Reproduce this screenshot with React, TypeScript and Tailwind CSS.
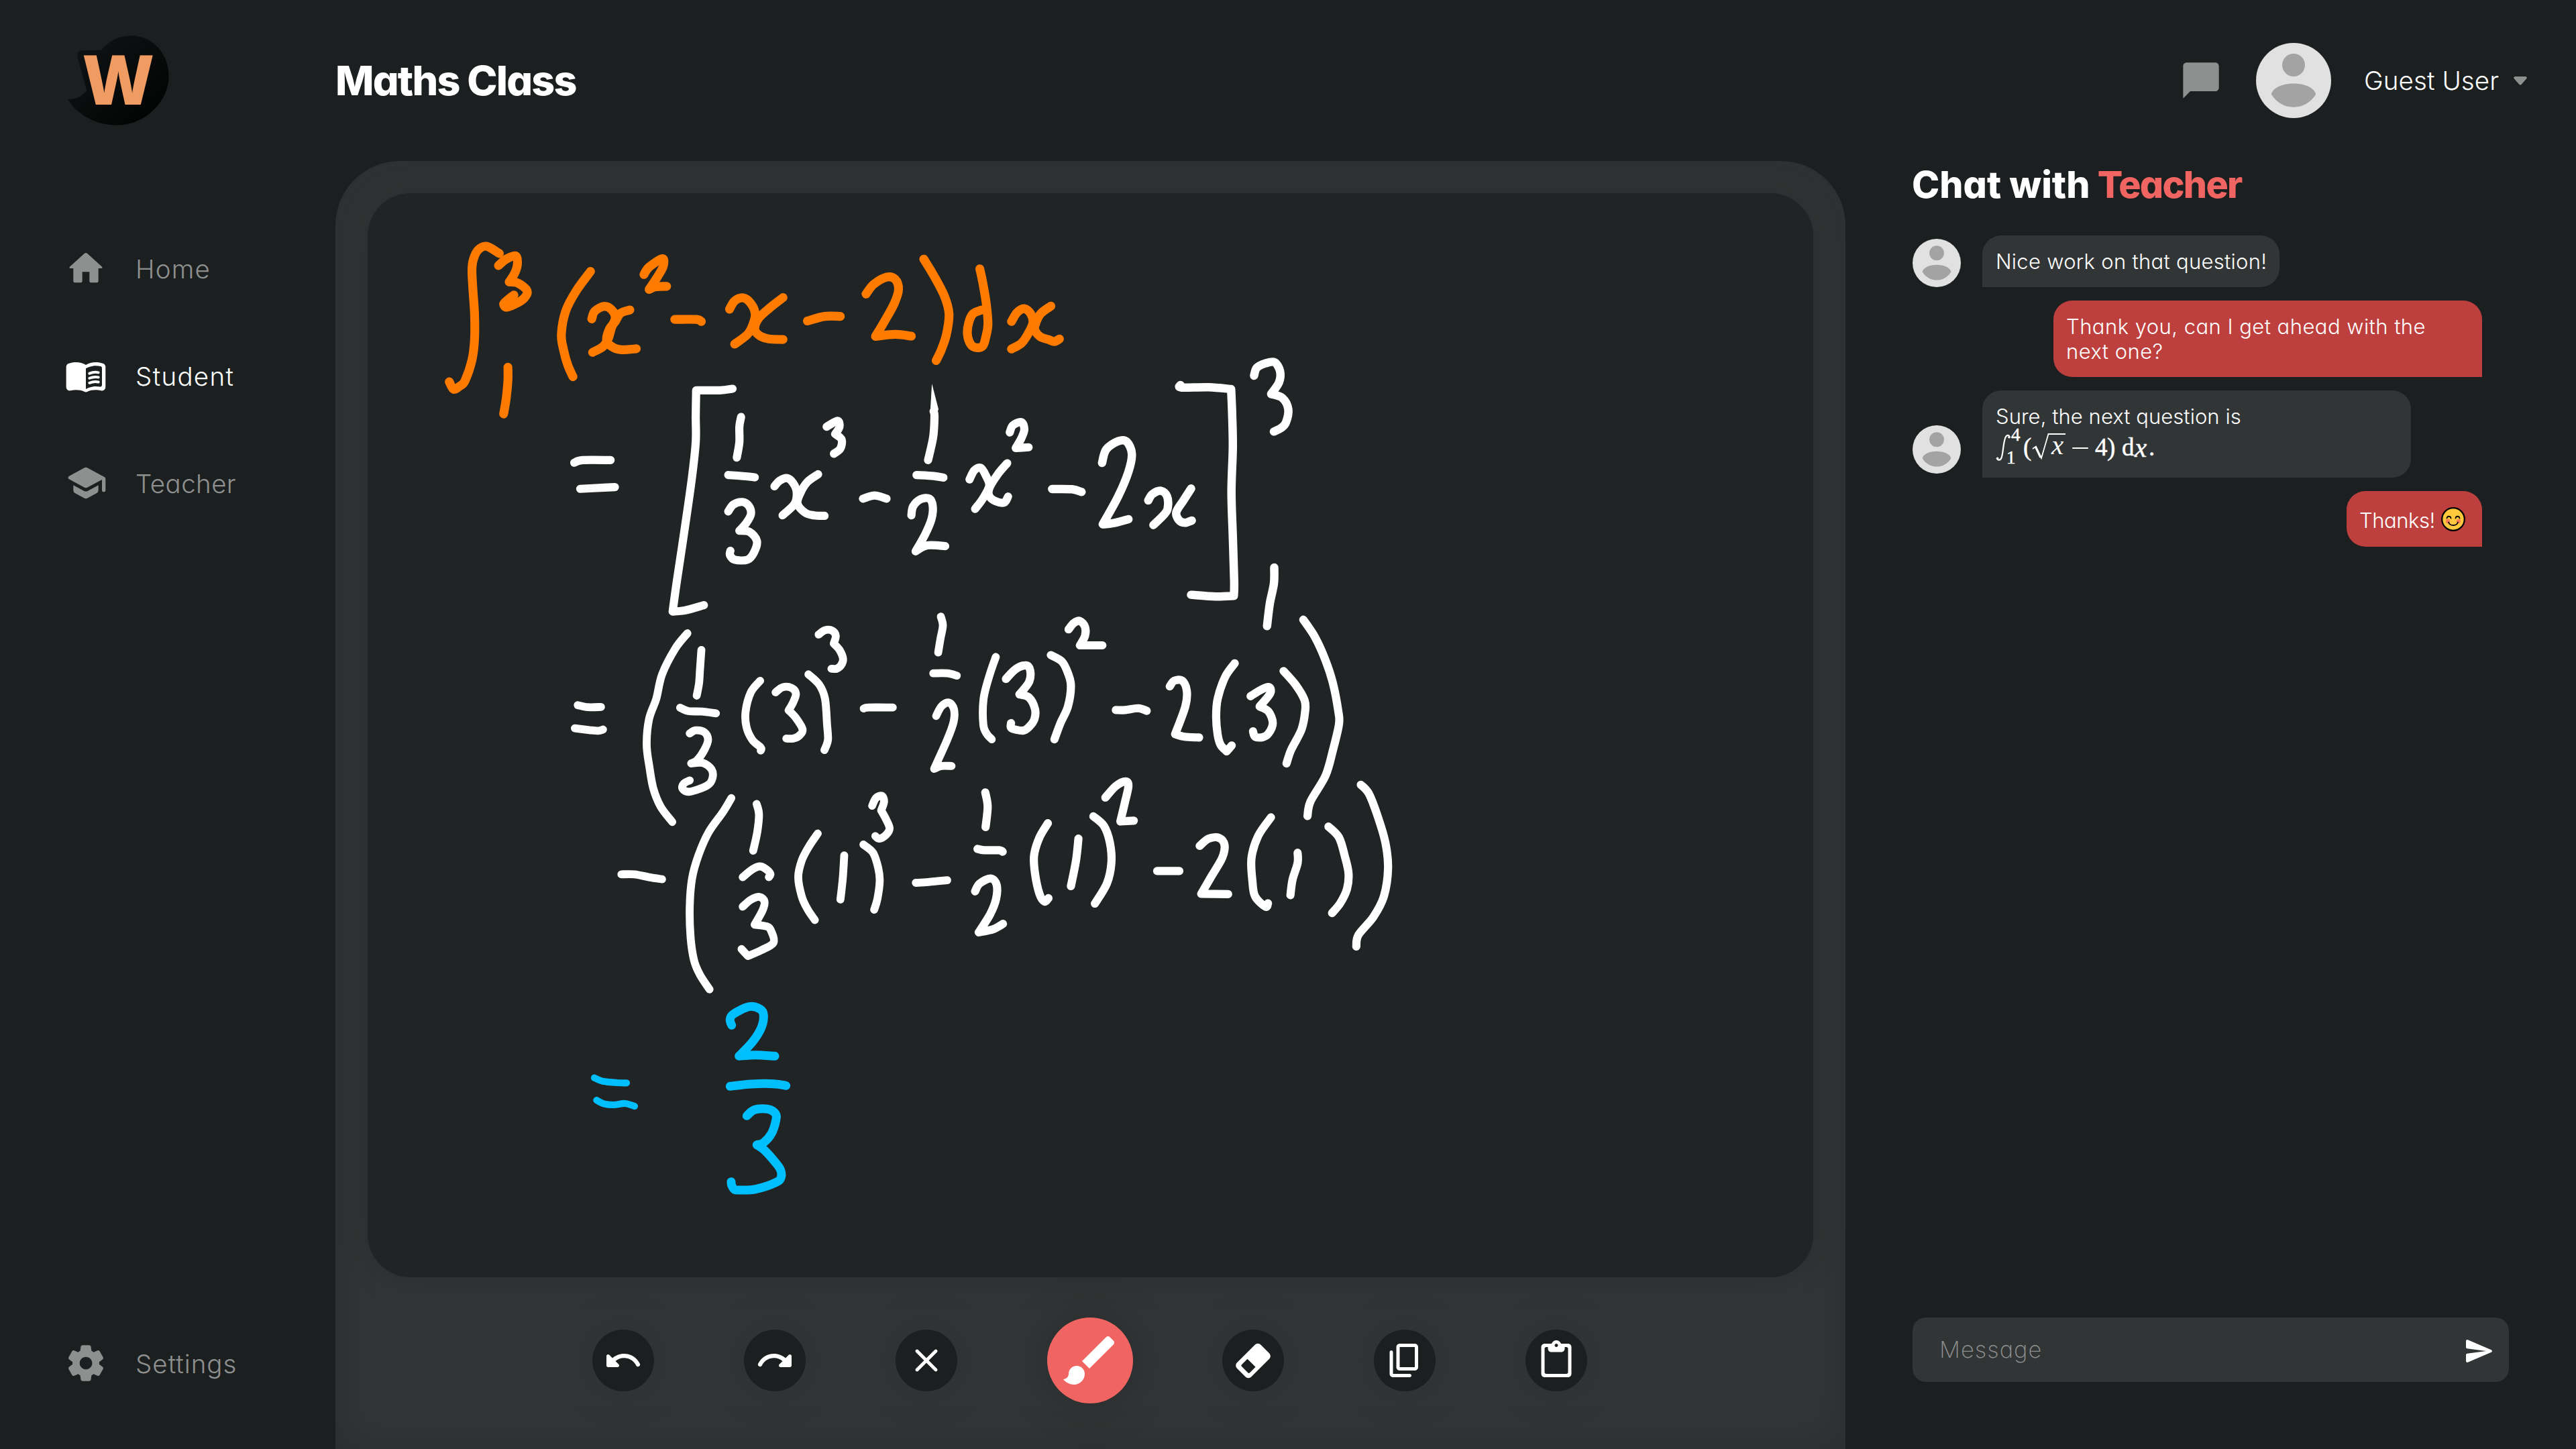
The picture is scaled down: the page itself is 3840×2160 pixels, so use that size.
import type { ReactNode } from "react";

/* ---------- whiteboard ink ---------- */

type Pt = [number, number];

// Turns "x,y x,y ..." into a Catmull-Rom path; a repeated point makes a corner.
function toPath(src: string): string {
  const p: Pt[] = src.trim().split(/\s+/).map((s) => s.split(",").map(Number) as Pt);
  let d = `M${p[0][0]} ${p[0][1]}`;
  const same = (a: Pt, b: Pt) => a[0] === b[0] && a[1] === b[1];
  for (let i = 0; i < p.length - 1; i++) {
    const p1 = p[i];
    const p2 = p[i + 1];
    if (same(p1, p2)) continue;
    const p0 = p[i - 1] ?? p1;
    const p3 = p[i + 2] ?? p2;
    const c1: Pt = [p1[0] + (p2[0] - p0[0]) / 6, p1[1] + (p2[1] - p0[1]) / 6];
    const c2: Pt = [p2[0] - (p3[0] - p1[0]) / 6, p2[1] - (p3[1] - p1[1]) / 6];
    d += `C${c1[0].toFixed(1)} ${c1[1].toFixed(1)} ${c2[0].toFixed(1)} ${c2[1].toFixed(1)} ${p2[0]} ${p2[1]}`;
  }
  return d;
}

const integralLine = [
  "195,125 165,97 145,112 134,150 131,190 133,260 137,360 137,460 131,540 115,620 104,640 88,654 78,625",
  "193,172 212,146 234,135 237,170 230,205 218,236 218,236 238,240 258,265 259,285 245,310 214,334 205,322 215,305 229,287",
  "215,568 215,620 211,690 205,750",
  "408,195 375,270 350,350 340,440 345,500 355,560 367,605",
  "411,380 418,350 440,331 458,345 466,375 457,415 450,455 437,488 413,510",
  "500,345 478,358 466,390 452,420 446,465 462,492 482,500 515,496",
  "533,207 545,178 576,145 578,175 565,215 545,265 545,265 560,255 586,253",
  "605,382 655,382 667,390",
  "733,342 745,310 765,298 783,320 793,360 788,400 775,440 745,478",
  "858,297 825,340 800,380 792,420 803,445 825,458 858,460",
  "915,388 955,370 992,370",
  "1052,283 1070,245 1100,217 1120,225 1128,265 1118,320 1095,390 1074,448 1074,448 1120,440 1158,447",
  "1187,147 1210,210 1235,290 1246,360 1240,440 1228,500 1216,542",
  "1318,185 1325,240 1333,320 1337,400 1332,450 1325,485 1310,492 1297,480 1289,440 1292,395 1302,360 1322,345",
  "1392,390 1405,355 1422,340 1437,360 1442,395 1430,440 1415,475 1392,497",
  "1484,330 1460,360 1448,400 1447,425 1460,450 1478,460 1492,468 1504,458",
];

const antiderivativeLeft = [
  "370,940 390,930 455,930",
  "384,1042 440,1037 465,1035",
  "740,652 710,658 655,658 655,658 654,760 654,860 645,1000 628,1200 610,1400 600,1520 600,1520 630,1515 673,1495",
  "760,762 756,800 756,860 750,920",
  "730,988 770,993 792,997",
  "730,1130 742,1103 763,1093 778,1108 783,1140 772,1175 756,1205 756,1205 780,1210 797,1245 790,1290 775,1318 745,1318 734,1300 735,1283",
  "838,1032 850,1010 868,1000 882,1020 890,1055 885,1100 857,1145",
  "940,985 915,1015 898,1060 892,1100 910,1135 930,1145 955,1147",
  "960,800 985,777 990,800 980,828 980,828 995,850 992,885 977,905",
  "1045,1080 1072,1068 1100,1080",
  "1210,740 1212,760 1209,840 1197,930",
  "1170,988 1210,992 1233,998",
  "1158,1145 1162,1110 1180,1082 1200,1080 1208,1110 1205,1160 1190,1220 1168,1285 1168,1285 1195,1262 1237,1265",
  "1294,1005 1305,970 1320,960 1332,990 1340,1030 1325,1080 1307,1120",
  "1382,942 1360,985 1340,1040 1340,1070 1355,1090 1375,1095 1384,1072",
  "1388,822 1395,795 1415,782 1422,810 1415,845 1402,883 1402,883 1432,880",
];

const antiderivativeRight = [
  "722,687 780,688 808,700",
  "868,570 880,510 915,473 940,475 955,530 945,610 915,720 870,845 870,845 900,840 945,822",
  "1003,738 1015,710 1040,695 1058,720 1060,770 1050,800 1018,848",
  "1128,685 1105,740 1085,790 1092,825 1110,838 1130,828",
  "1097,222 1100,233 1180,232 1245,240 1245,240 1248,350 1250,500 1246,700 1250,900 1254,1100 1253,1165 1253,1165 1200,1168 1128,1160",
  "1312,180 1320,145 1345,125 1372,120 1388,160 1385,210 1362,262 1362,262 1395,280 1412,330 1405,390 1390,415 1370,430",
  "1371,1038 1370,1110 1358,1200 1350,1300",
];

const substitutionLeft = [
  "95,395 130,403 175,402",
  "85,485 135,492 165,495 182,490",
  "472,115 430,175 385,275 365,370 340,450 332,550 342,640 355,720 380,790 420,850",
  "520,180 515,260 512,310 504,358",
  "447,405 475,418 520,420 570,427",
  "480,505 500,493 530,500 543,530 530,570 505,610 485,622 485,622 525,620 555,645 558,680 540,708 480,732 455,720 460,700 480,688",
  "722,300 690,345 672,420 675,480 695,530 724,560 724,572",
  "775,345 800,325 830,328 845,350 835,385 820,415 820,415 845,445 868,490 855,515 835,525 812,525",
  "888,275 925,315 945,370 952,470 955,530 943,570",
  "923,120 945,103 970,105 982,125 975,155 975,155 995,180 1007,215 1000,240 985,253 967,253",
  "1078,408 1095,404 1178,404",
  "1343,50 1350,85 1342,135 1334,190",
  "1317,271 1365,271 1398,280",
  "1327,437 1345,400 1370,385 1388,410 1387,460 1365,530 1320,643 1320,643 1345,632 1380,632",
  "1532,207 1510,280 1490,370 1489,470 1500,505 1518,528",
  "245,1054 290,1054 340,1065 385,1073",
  "623,757 595,810 545,890 510,980 488,1070 480,1180 483,1300 495,1390 515,1445 548,1502",
  "710,780 718,820 712,890 698,962",
  "662,1065 695,1035 720,1023 740,1032 757,1052 752,1065",
  "662,1180 690,1153 720,1142 737,1160 730,1195 703,1250 703,1250 745,1257 760,1275 768,1320 725,1350 680,1372 680,1372 658,1345",
  "920,895 890,945 865,1000 853,1065 865,1140 885,1190 910,1232",
  "1011,980 1006,1070 998,1152",
  "1077,938 1110,970 1128,1030 1133,1080 1125,1150 1114,1192",
  "1107,787 1120,757 1140,748 1148,770 1138,805 1138,805 1155,840 1167,875 1155,900 1132,915 1118,905",
  "1257,1087 1300,1084 1365,1077",
];

const substitutionRight = [
  "154,735 162,790 155,870",
  "128,955 150,960 200,960 212,966",
  "120,1120 135,1090 172,1070 192,1095 190,1150 170,1210 132,1280 132,1280 180,1268 213,1247",
  "223,293 255,255 290,240 304,260 300,305 268,353 268,353 300,365 320,410 318,450 300,480 280,494 242,485 240,465",
  "373,200 410,225 430,270 440,320 430,400 405,465 385,528",
  "432,100 450,75 470,67 487,90 487,125 470,162 470,162 545,162",
  "590,414 620,414 665,407 693,417",
  "770,322 785,300 812,300 827,340 822,400 788,508 788,508 820,518 868,521",
  "987,232 955,285 930,370 925,440 930,510 940,550 960,575 960,575 977,552",
  "1040,360 1075,335 1102,325 1105,350 1070,400 1070,400 1100,420 1114,465 1100,505 1080,520 1055,518 1048,497",
  "1150,262 1190,315 1220,375 1222,420 1210,490 1175,570 1160,622",
  "1216,62 1255,130 1290,220 1315,310 1333,420 1335,470 1315,570 1290,670 1240,770 1230,827",
  "363,855 335,910 317,980 320,1050 335,1130 352,1160 365,1147",
  "465,915 457,1000 440,1100",
  "515,828 550,865 570,930 575,1010 560,1090 520,1168",
  "555,755 590,710 622,692 632,710 620,775 605,848 605,848 650,845",
  "728,1041 802,1041",
  "870,943 900,915 935,912 953,940 945,990 910,1060 875,1130 875,1130 965,1131",
  "1108,832 1065,905 1043,990 1046,1080 1055,1140 1090,1180 1098,1167",
  "1197,970 1197,1010 1180,1075 1173,1135",
  "1300,868 1335,910 1355,985 1367,1050 1362,1110 1340,1165 1312,1205",
  "1408,705 1435,740 1465,830 1490,930 1499,1030 1485,1140 1450,1220 1400,1290 1393,1335",
];

const answerEquals = ["198,440 235,455 300,462 342,463", "208,540 240,556 285,561 335,555 378,567"];

const answerFraction = [
  "812,205 805,180 820,155 890,122 940,133 955,160 945,215 905,280 845,343 845,343 920,338 1005,343",
  "805,478 900,468 1000,467 1055,475",
  "880,610 915,583 975,580 1008,600 1010,630 990,690 955,730 925,740 925,740 960,765 1005,815 1030,850 1033,885 1010,908 920,938 850,942 825,940 812,920 810,905",
];

function Ink({ at, scale, color, width, strokes }: { at: Pt; scale: Pt; color: string; width: number; strokes: string[] }) {
  return (
    <g
      transform={`translate(${at[0]} ${at[1]}) scale(${scale[0]} ${scale[1]})`}
      fill="none"
      stroke={color}
      strokeWidth={width}
      strokeLinecap="round"
      strokeLinejoin="round"
    >
      {strokes.map((s) => (
        <path key={s} d={toPath(s)} vectorEffect="non-scaling-stroke" />
      ))}
    </g>
  );
}

function Whiteboard() {
  return (
    <div className="h-[1616px] w-full overflow-hidden rounded-[64px] bg-[#202425] shadow-[0_0_48px_rgba(0,0,0,0.16)]">
      <svg className="block h-full w-full" viewBox="548 288 2155 1616">
        <Ink at={[620, 330]} scale={[0.6378, 0.3827]} color="#ff7b00" width={13.2} strokes={integralLine} />
        <Ink at={[620, 330]} scale={[0.6378, 0.3827]} color="#ffffff" width={12.2} strokes={antiderivativeLeft} />
        <path d="M1389.200 572 L1399 610 L1397 616 L1386.500 616 Z" fill="#ffffff" />
        <Ink at={[1200, 500]} scale={[0.5102, 0.3333]} color="#ffffff" width={12.5} strokes={antiderivativeRight} />
        <Ink at={[820, 900]} scale={[0.4337, 0.3827]} color="#ffffff" width={11.8} strokes={substitutionLeft} />
        <Ink at={[1400, 900]} scale={[0.4464, 0.3827]} color="#ffffff" width={12.2} strokes={substitutionRight} />
        <Ink at={[820, 1460]} scale={[0.3333, 0.3333]} color="#00bfff" width={10.2} strokes={answerEquals} />
        <Ink at={[820, 1460]} scale={[0.3333, 0.3333]} color="#00bfff" width={13} strokes={answerFraction} />
      </svg>
    </div>
  );
}

/* ---------- icons ---------- */

function Icon({ d, className }: { d: string; className: string }) {
  return (
    <svg viewBox="0 0 24 24" className={className} fill="currentColor">
      <path d={d} />
    </svg>
  );
}

const icons = {
  home: "M10 19v-5h4v5c0 .55.45 1 1 1h3c.55 0 1-.45 1-1v-7h1.7c.46 0 .68-.57.33-.87L12.67 3.6c-.38-.34-.96-.34-1.34 0l-8.36 7.53c-.34.3-.13.87.33.87H5v7c0 .55.45 1 1 1h3c.55 0 1-.45 1-1z",
  school:
    "M5 13.18v2.81c0 .73.4 1.41 1.04 1.76l5 2.73c.6.33 1.32.33 1.92 0l5-2.73c.64-.35 1.04-1.03 1.04-1.76v-2.81l-6.04 3.3c-.6.33-1.32.33-1.92 0L5 13.18zm6.04-9.66l-8.43 4.6c-.69.38-.69 1.38 0 1.76l8.43 4.6c.6.33 1.32.33 1.92 0L21 10.09V16c0 .55.45 1 1 1s1-.45 1-1V9.59c0-.37-.2-.7-.52-.88l-9.52-5.19c-.6-.32-1.32-.32-1.92 0z",
  settings:
    "M19.5 12c0-.23-.01-.45-.03-.68l1.86-1.41c.4-.3.51-.86.26-1.3l-1.87-3.23c-.25-.44-.79-.62-1.25-.42l-2.15.91c-.37-.26-.76-.49-1.17-.68l-.29-2.31c-.06-.5-.49-.88-.99-.88h-3.73c-.51 0-.94.38-1 .88l-.29 2.31c-.41.19-.8.42-1.17.68l-2.15-.91c-.46-.2-1-.02-1.25.42L2.41 8.62c-.25.44-.14.99.26 1.3l1.86 1.41c-.02.22-.03.44-.03.67s.01.45.03.68l-1.86 1.41c-.4.3-.51.86-.26 1.3l1.87 3.23c.25.44.79.62 1.25.42l2.15-.91c.37.26.76.49 1.17.68l.29 2.31c.06.5.49.88.99.88h3.73c.5 0 .93-.38.99-.88l.29-2.31c.41-.19.8-.42 1.17-.68l2.15.91c.46.2 1 .02 1.25-.42l1.87-3.23c.25-.44.14-.99-.26-1.3l-1.86-1.41c.03-.23.04-.45.04-.68zm-7.46 3.5c-1.93 0-3.5-1.57-3.5-3.5s1.57-3.5 3.5-3.5 3.5 1.57 3.5 3.5-1.57 3.5-3.5 3.5z",
  chat: "M20 2H4c-1.1 0-2 .9-2 2v18l4-4h14c1.1 0 2-.9 2-2V4c0-1.1-.9-2-2-2z",
  undo: "M12.5 8c-2.65 0-5.05.99-6.9 2.6L3.71 8.71C3.08 8.08 2 8.52 2 9.41V15c0 .55.45 1 1 1h5.59c.89 0 1.34-1.08.71-1.71l-1.91-1.91c1.39-1.16 3.16-1.88 5.12-1.88 3.16 0 5.89 1.84 7.19 4.5.27.56.91.84 1.5.64.71-.23 1.07-1.04.75-1.72C20.23 10.42 16.65 8 12.5 8z",
  close:
    "M18.3 5.71c-.39-.39-1.02-.39-1.41 0L12 10.59 7.11 5.7c-.39-.39-1.02-.39-1.41 0-.39.39-.39 1.02 0 1.41L10.59 12 5.7 16.89c-.39.39-.39 1.02 0 1.41.39.39 1.02.39 1.41 0L12 13.41l4.89 4.89c.39.39 1.02.39 1.41 0 .39-.39.39-1.02 0-1.41L13.41 12l4.89-4.89c.38-.38.38-1.02 0-1.4z",
  brush:
    "M7 14c-1.66 0-3 1.34-3 3 0 1.31-1.16 2-2 2 .92 1.22 2.49 2 4 2 2.21 0 4-1.79 4-4 0-1.66-1.34-3-3-3zm13.71-9.37l-1.34-1.34c-.39-.39-1.02-.39-1.41 0L9 12.25 11.75 15l8.96-8.96c.39-.39.39-1.02 0-1.41z",
  copy: "M15 20H5V7c0-.55-.45-1-1-1s-1 .45-1 1v13c0 1.1.9 2 2 2h10c.55 0 1-.45 1-1s-.45-1-1-1zm5-4V4c0-1.1-.9-2-2-2H9c-1.1 0-2 .9-2 2v12c0 1.1.9 2 2 2h9c1.1 0 2-.9 2-2zm-2 0H9V4h9v12z",
  paste:
    "M19 2h-4.18C14.4.84 13.3 0 12 0S9.6.84 9.18 2H5c-1.1 0-2 .9-2 2v16c0 1.1.9 2 2 2h14c1.1 0 2-.9 2-2V4c0-1.1-.9-2-2-2zm-7 0c.55 0 1 .45 1 1s-.45 1-1 1-1-.45-1-1 .45-1 1-1zm6 18H6c-.55 0-1-.45-1-1V5c0-.55.45-1 1-1h1v1c0 1.1.9 2 2 2h6c1.1 0 2-.9 2-2V4h1c.55 0 1 .45 1 1v14c0 .55-.45 1-1 1z",
  send: "M3.4 20.4l17.45-7.48c.81-.35.81-1.49 0-1.84L3.4 3.6c-.66-.29-1.39.2-1.39.91L2 9.12c0 .5.37.93.87.99L17 12 2.87 13.88c-.5.07-.87.5-.87 1l.01 4.61c0 .71.73 1.2 1.39.91z",
};

function BookIcon({ className }: { className: string }) {
  return (
    <svg viewBox="0 0 24 24" className={className} fill="currentColor">
      <path
        fillRule="evenodd"
        d="M17.5 4.5c-1.95 0-4.05.4-5.5 1.5-1.45-1.1-3.55-1.5-5.5-1.5-1.45 0-2.99.22-4.28.79C1.49 5.62 1 6.33 1 7.14v11.28c0 1.3 1.22 2.26 2.48 1.94.98-.25 2.02-.36 3.02-.36 1.56 0 3.22.26 4.56.92.6.3 1.28.3 1.87 0 1.34-.67 3-.92 4.56-.92 1 0 2.04.11 3.02.36 1.26.33 2.48-.63 2.48-1.94V7.14c0-.81-.49-1.52-1.22-1.85-1.28-.57-2.82-.79-4.27-.79zM21 17.23c0 .63-.58 1.09-1.2.98-.75-.14-1.53-.2-2.3-.2-1.7 0-4.15.65-5.5 1.5V8c1.35-.85 3.8-1.5 5.5-1.5.92 0 1.83.09 2.7.28.46.1.8.51.8.98v9.47z"
      />
      <path
        fill="none"
        stroke="currentColor"
        strokeWidth="1.5"
        strokeLinecap="round"
        d="M14 10.75C15.6 10.1 17.5 9.9 19 10.25M14 13.4C15.6 12.75 17.5 12.55 19 12.9M14 16.05C15.6 15.4 17.5 15.2 19 15.55"
      />
    </svg>
  );
}

function EraserIcon() {
  return (
    <svg viewBox="-30 -30 60 60" className="h-[60px] w-[60px]">
      <path
        transform="translate(0 0.5) rotate(45)"
        fillRule="evenodd"
        fill="#ffffff"
        d="M-9-25H9A6 6 0 0 1 15-19V19A6 6 0 0 1 9 25H-9A6 6 0 0 1-15 19V-19A6 6 0 0 1-9-25ZM-8 4V16A2 2 0 0 0-6 18H7A2 2 0 0 0 9 16V4Z"
      />
    </svg>
  );
}

function Avatar({ className }: { className: string }) {
  return (
    <svg viewBox="0 0 112 112" className={className}>
      <circle cx="56" cy="56" r="56" fill="#e1e1e1" />
      <circle cx="56" cy="33" r="17" fill="#a3a3a3" />
      <path d="M22.8 76.5C25 66.5 40 60.4 56 60.4S87 66.5 89.2 76.5C82 88.5 70 95.7 56 95.7S30 88.5 22.8 76.5Z" fill="#a3a3a3" />
    </svg>
  );
}

function Logo() {
  return (
    <svg viewBox="96 48 160 144" className="h-[144px] w-[160px]">
      <defs>
        <linearGradient id="blob" x1="0" y1="0" x2="1" y2="1">
          <stop offset="0.2" stopColor="#0e1112" />
          <stop offset="0.9" stopColor="#020303" />
        </linearGradient>
      </defs>
      <path
        transform="scale(0.6122 0.5102)"
        fill="url(#blob)"
        d="M165 290C190 290 202 276 211 265L189 168C186 155 192 147 202 147H246C264 120 290 104 320 104C370 104 411 155 411 222C411 300 350 366 287 366C235 366 190 338 165 290Z"
      />
      <text x="176.3" y="156" textAnchor="middle" className="font-['Open_Sans'] text-[102px] font-extrabold" fill="#ef9b62">
        W
      </text>
    </svg>
  );
}

function Smile() {
  return (
    <svg viewBox="0 0 36 36" className="ml-[9px] h-9 w-9 shrink-0">
      <circle cx="18" cy="18" r="16.8" fill="#ffc83d" stroke="#000000" strokeWidth="2.2" />
      <circle cx="10" cy="21" r="3.2" fill="#ff8257" />
      <circle cx="26" cy="21" r="3.2" fill="#ff8257" />
      <path
        d="M8.5 16.5C9 12.8 14 12.8 14.5 16.5M21.5 16.5C22 12.8 27 12.8 27.5 16.5M11 22.5C13 28.5 23 28.5 25 22.5"
        fill="none"
        stroke="#000000"
        strokeWidth="1.8"
        strokeLinecap="round"
      />
    </svg>
  );
}

/* ---------- sidebar ---------- */

function NavItem({ icon, label, className }: { icon: ReactNode; label: string; className: string }) {
  return (
    <a className={`flex h-16 items-center ${className}`}>
      {icon}
      <span className="pt-[2px] pl-[42px] text-[38.5px] leading-none font-light">{label}</span>
    </a>
  );
}

function Sidebar() {
  return (
    <aside className="flex w-[500px] shrink-0 flex-col pl-24">
      <div className="h-[240px] pt-12">
        <Logo />
      </div>
      <nav className="mt-[128px] flex flex-col gap-24">
        <NavItem icon={<Icon d={icons.home} className="h-16 w-16" />} label="Home" className="tracking-[1.2px] text-[#8e908f]" />
        <NavItem icon={<BookIcon className="h-16 w-16" />} label="Student" className="tracking-[1.3px] text-white" />
        <NavItem icon={<Icon d={icons.school} className="h-16 w-16" />} label="Teacher" className="tracking-[0.4px] text-[#8e908f]" />
      </nav>
      <div className="mt-auto mb-24">
        <NavItem icon={<Icon d={icons.settings} className="h-16 w-16" />} label="Settings" className="tracking-[1px] text-[#8e908f]" />
      </div>
    </aside>
  );
}

/* ---------- toolbar ---------- */

function Tool({ children }: { children: ReactNode }) {
  return (
    <button className="flex h-[92px] w-[92px] items-center justify-center rounded-full bg-[#1c1f20] text-white shadow-[0_0_72px_rgba(0,0,0,0.12)]">
      {children}
    </button>
  );
}

function Toolbar() {
  return (
    <div className="flex h-[248px] items-center justify-center gap-[133.7px] pr-[2px]">
      <Tool>
        <Icon d={icons.undo} className="h-[60px] w-[60px]" />
      </Tool>
      <Tool>
        <Icon d={icons.undo} className="h-[60px] w-[60px] -scale-x-100" />
      </Tool>
      <Tool>
        <Icon d={icons.close} className="h-[60px] w-[60px]" />
      </Tool>
      <button className="flex h-32 w-32 items-center justify-center rounded-full bg-[#f06561] text-white shadow-[0_0_72px_rgba(0,0,0,0.2)]">
        <Icon d={icons.brush} className="h-24 w-24" />
      </button>
      <Tool>
        <EraserIcon />
      </Tool>
      <Tool>
        <Icon d={icons.copy} className="h-[60px] w-[60px]" />
      </Tool>
      <Tool>
        <Icon d={icons.paste} className="h-[60px] w-[60px]" />
      </Tool>
    </div>
  );
}

/* ---------- chat ---------- */

function Formula() {
  return (
    <div className="flex h-[53px] font-['Liberation_Serif'] text-[37px] leading-[56px] [-webkit-text-stroke:0.5px_white]">
      <svg viewBox="0 0 22 53" className="h-[53px] w-[22px] shrink-0">
        <path
          d="M20.5 12.5C20 9.5 17 8.6 15 12C11 19 11.5 36 8.5 43.5C7 47.5 3 47.5 2 44.5"
          fill="none"
          stroke="#ffffff"
          strokeWidth="2.2"
          strokeLinecap="round"
        />
        <circle cx="20" cy="12.8" r="1.8" fill="#ffffff" />
        <circle cx="2.6" cy="44.2" r="1.8" fill="#ffffff" />
      </svg>
      <div className="flex w-[19px] flex-col justify-between text-[27px] leading-[19px]">
        <span className="pl-px">4</span>
        <span className="-ml-[6px]">1</span>
      </div>
      <span className="w-[13px]">(</span>
      <svg viewBox="0 0 50 53" className="h-[53px] w-[50px] shrink-0">
        <path d="M1 30L6 26.5L14 44L24.5 8H50" fill="none" stroke="#ffffff" strokeWidth="1.8" />
        <path d="M5.5 27.5L13 43" stroke="#ffffff" strokeWidth="3" />
        <text x="29" y="38" fill="#ffffff" className="font-['Liberation_Serif'] text-[41px] italic">
          x
        </text>
      </svg>
      <svg viewBox="0 0 44 53" className="h-[53px] w-[44px] shrink-0">
        <path d="M11 29H33" stroke="#ffffff" strokeWidth="2" strokeLinecap="round" />
      </svg>
      <span className="w-[18px]">4</span>
      <span className="w-[22px]">)</span>
      <span className="w-[19px]">d</span>
      <span className="w-[21px] text-[41px] italic">x</span>
      <span>.</span>
    </div>
  );
}

function Chat() {
  return (
    <section className="flex flex-1 flex-col pr-[100px] pl-[100px]">
      <h2 className="mt-[5px] -ml-px flex h-[60px] items-center text-[55.5px] leading-none font-extrabold whitespace-pre">
        <span>Chat with </span>
        <span className="-ml-px tracking-[-1.7px] text-[#f06561]">Teacher</span>
      </h2>
      <div className="mt-[46px] flex w-[849px] flex-col gap-5 text-[31px] leading-[37px] font-light">
        <div className="flex">
          <Avatar className="mr-8 h-[72px] w-[72px] shrink-0 self-end" />
          <p className="w-[443px] rounded-[28px] rounded-bl-none bg-[#323536] py-5 pl-5 tracking-[0.28px]">Nice work on that question!</p>
        </div>
        <p className="w-[639px] self-end rounded-[28px] rounded-br-none bg-[#be403e] py-5 pl-[19px] tracking-[0.45px]">
          Thank you, can I get ahead with the
          <br />
          next one?
        </p>
        <div className="flex">
          <Avatar className="mr-8 mb-[6px] h-[72px] w-[72px] shrink-0 self-end" />
          <div className="h-[130px] w-[639px] rounded-[28px] rounded-bl-none bg-[#323536] pt-5 pl-5">
            <p className="tracking-[0.05px]">Sure, the next question is</p>
            <Formula />
          </div>
        </div>
        <p className="flex h-[83px] w-[202px] items-center self-end rounded-[28px] rounded-br-none bg-[#be403e] pl-[19px]">
          <span className="pt-[3px] tracking-[-0.45px]">Thanks!</span>
          <Smile />
        </p>
      </div>
      <div className="mt-auto mb-[100px] flex h-24 w-[889px] items-center justify-between rounded-[20px] bg-[#323536] pr-5 pl-10 text-white">
        <span className="text-[34.5px] leading-none font-extralight tracking-[1px] text-[#8e908f]">Message</span>
        <Icon d={icons.send} className="mt-[3px] h-12 w-12" />
      </div>
    </section>
  );
}

/* ---------- page ---------- */

export default function App() {
  return (
    <div className="flex h-[2160px] w-[3840px] overflow-hidden bg-[#1c1f20] font-['Inter',sans-serif] text-white [font-feature-settings:'cv11']">
      <Sidebar />
      <div className="flex flex-1 flex-col">
        <header className="flex h-[240px] shrink-0 items-center pr-[73px]">
          <h1 className="text-[61px] leading-none font-extrabold tracking-[-1.8px]">Maths Class</h1>
          <Icon d={icons.chat} className="ml-auto h-16 w-16 text-[#8e908f]" />
          <Avatar className="ml-[50px] h-28 w-28" />
          <span className="ml-[49px] w-[202px] text-[38.5px] leading-none font-light tracking-[0.1px] whitespace-nowrap">Guest User</span>
          <svg viewBox="0 0 20 13" className="ml-[21px] h-[13px] w-5">
            <path d="M2 0H18Q21 1 19 3.5L11.5 12Q10 13.5 8.5 12L1 3.5Q-1 1 2 0Z" fill="#8e908f" />
          </svg>
        </header>
        <div className="flex flex-1">
          <main className="h-[1920px] w-[2251px] rounded-t-[96px] bg-[#323536] px-12 pt-12 shadow-[inset_0_0_64px_rgba(0,0,0,0.16)]">
            <Whiteboard />
            <Toolbar />
          </main>
          <Chat />
        </div>
      </div>
    </div>
  );
}
